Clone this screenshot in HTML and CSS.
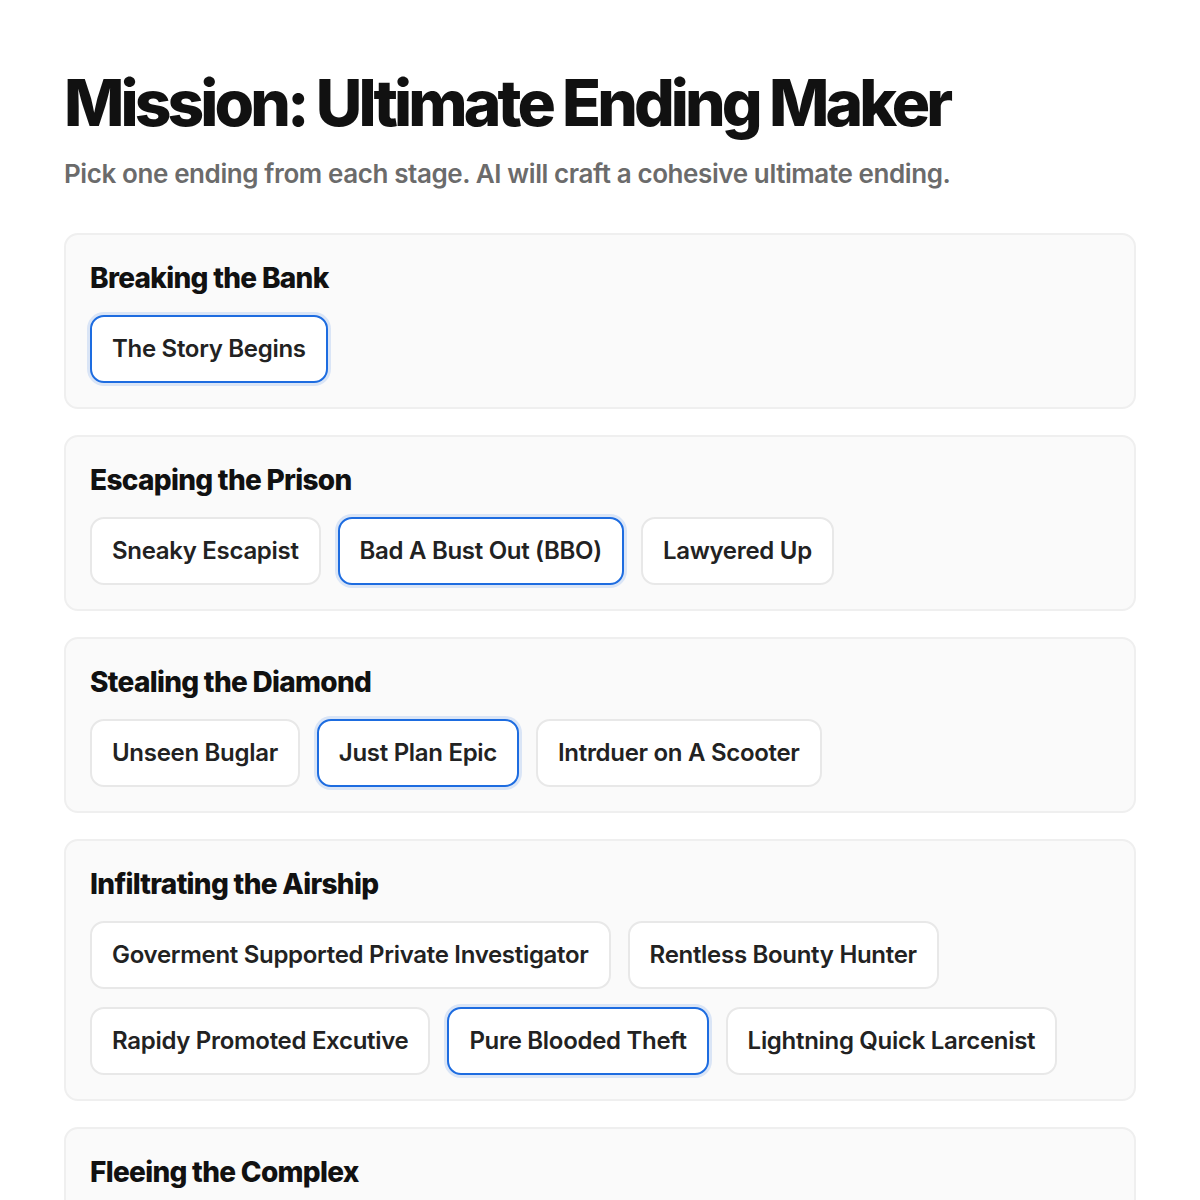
FILE: index.html
```html
<!DOCTYPE html>
<html lang="en">
<head>
    <meta charset="UTF-8">
    <meta name="viewport" content="width=device-width, initial-scale=1.0">
    <title>Mission: Ultimate Ending Maker</title>
    <link rel="stylesheet" href="styles.css">
</head>
<body>
    <div class="container">
        <h1>Mission: Ultimate Ending Maker</h1>
        <p class="subtitle">Pick one ending from each stage. AI will craft a cohesive ultimate ending.</p>

        <div class="stage">
            <h2>Breaking the Bank</h2>
            <div class="options">
                <button class="option selected">The Story Begins</button>
            </div>
        </div>

        <div class="stage">
            <h2>Escaping the Prison</h2>
            <div class="options">
                <button class="option">Sneaky Escapist</button>
                <button class="option selected">Bad A Bust Out (BBO)</button>
                <button class="option">Lawyered Up</button>
            </div>
        </div>

        <div class="stage">
            <h2>Stealing the Diamond</h2>
            <div class="options">
                <button class="option">Unseen Buglar</button>
                <button class="option selected">Just Plan Epic</button>
                <button class="option">Intrduer on A Scooter</button>
            </div>
        </div>

        <div class="stage">
            <h2>Infiltrating the Airship</h2>
            <div class="options">
                <button class="option">Goverment Supported Private Investigator</button>
                <button class="option">Rentless Bounty Hunter</button>
                <button class="option">Rapidy Promoted Excutive</button>
                <button class="option selected">Pure Blooded Theft</button>
                <button class="option">Lightning Quick Larcenist</button>
            </div>
        </div>

        <div class="stage">
            <h2>Fleeing the Complex</h2>
            <div class="options">
                <button class="option">Clean Getaway</button>
                <button class="option selected">Blaze of Glory</button>
            </div>
        </div>
    </div>

    <script>
        document.querySelectorAll('.options').forEach((group) => {
            group.addEventListener('click', (e) => {
                const btn = e.target.closest('.option');
                if (!btn) return;
                group.querySelectorAll('.option').forEach((b) => b.classList.remove('selected'));
                btn.classList.add('selected');
            });
        });
    </script>
</body>
</html>
```

FILE: styles.css
```css
body {
    margin: 0;
    background: #ffffff;
    font-family: Inter, "Noto Sans", sans-serif;
    color: #111;
}

.container {
    padding: 68px 64px 40px;
}

h1 {
    margin: 0;
    font-size: 64px;
    line-height: 70px;
    font-weight: 800;
    letter-spacing: -3.9px;
    color: #111;
}

.subtitle {
    margin: 19px 0 42px;
    font-size: 26px;
    line-height: 34px;
    font-weight: 600;
    letter-spacing: -0.4px;
    color: #6b6b6b;
}

.stage {
    background: #fafafa;
    border: 2px solid #efefef;
    border-radius: 14px;
    padding: 26px 24px 24px;
    margin-bottom: 26px;
}

h2 {
    margin: 0 0 20px;
    font-size: 28px;
    line-height: 34px;
    font-weight: 800;
    letter-spacing: -0.7px;
    color: #111;
}

.options {
    display: flex;
    flex-wrap: wrap;
    gap: 18px 17px;
}

.option {
    background: #fff;
    border: 2px solid #e8e8e8;
    border-radius: 14px;
    padding: 16px 20px;
    font-family: inherit;
    font-size: 24px;
    line-height: 32px;
    font-weight: 600;
    letter-spacing: -0.3px;
    color: #222;
    cursor: pointer;
}

.option.selected {
    border-color: #1d6ce0;
    box-shadow: 0 0 0 3px rgba(29, 108, 224, 0.14);
}
```
